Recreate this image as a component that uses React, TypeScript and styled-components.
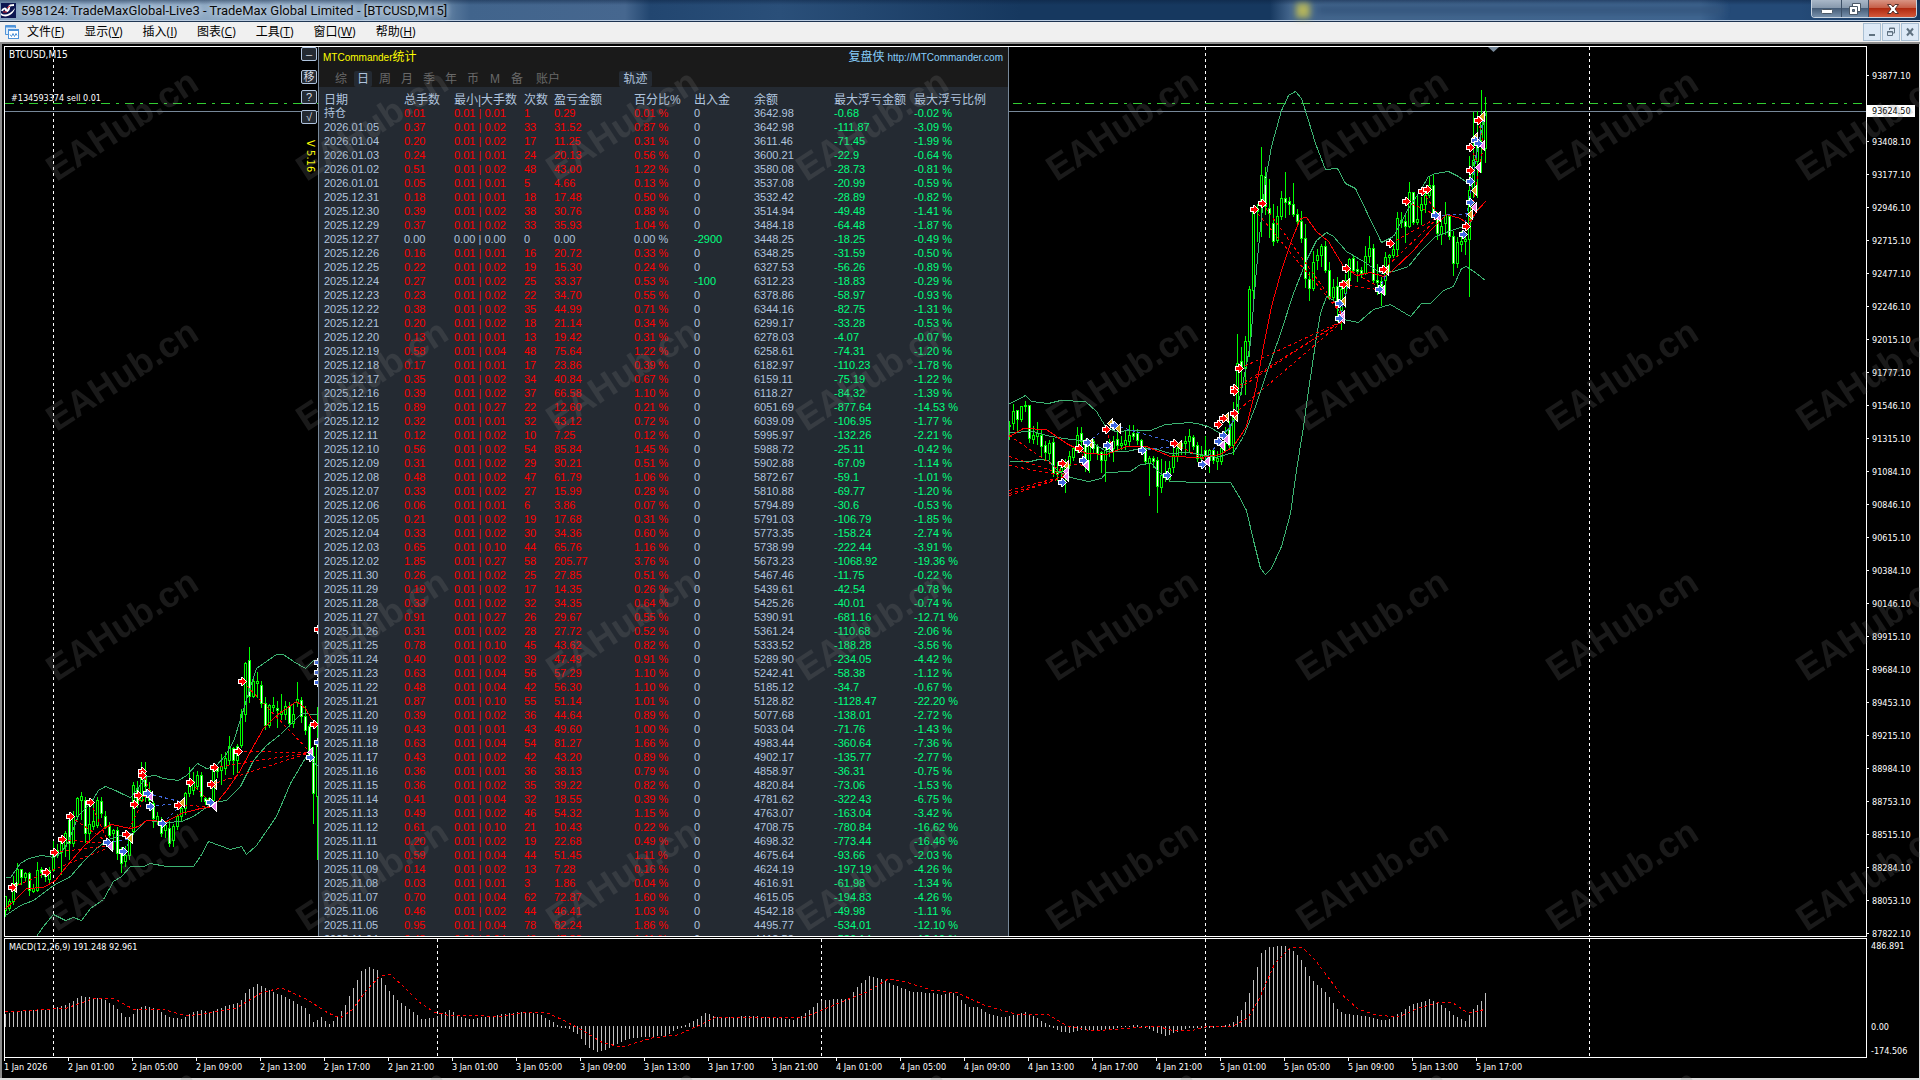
import React from 'react';
import styled, { createGlobalStyle, css } from 'styled-components';

const ui = `Roboto, "Noto Sans CJK SC", sans-serif`;
const axisFont = `"DejaVu Sans Condensed", "Noto Sans CJK SC", sans-serif`;
const panelFont = `"Liberation Sans", "Noto Sans CJK SC", sans-serif`;

const GlobalStyle = createGlobalStyle`
  *, *::before, *::after { box-sizing: border-box; }
  html, body, #root { height: 100%; }
  body { margin: 0; background: #000; overflow: hidden; }
  button { font: inherit; margin: 0; padding: 0; border: 0; background: none; color: inherit; }
`;

const Window = styled.div`
  position: relative;
  height: 100vh;
  min-height: 700px;
  display: flex;
  flex-direction: column;
  overflow: hidden;
  background: #000;
  font-family: ${ui};
`;

const TitleBar = styled.header`
  position: relative;
  height: 22px;
  flex: none;
  display: flex;
  align-items: flex-start;
  padding-right: 3px;
  border-bottom: 1px solid #1d3350;
  box-shadow: inset 0 -1px 0 #b9cbe0;
  background:
    linear-gradient(180deg, rgba(10, 30, 60, 0.45) 0, rgba(10, 30, 60, 0) 5px),
    linear-gradient(90deg, #86a2c0 0, #8fa9c4 300px, #7f9bb8 420px, #41648c 470px, #46678f 625px, #224670 650px, #2a4f79 780px, #16385f 1020px, #16385f 1270px, #43658c 1290px, #3f6590 1700px, #244a77 1730px, #244a77 1800px, #16385f 100%);
`;

const AppTitle = styled.h1`
  margin: 0 0 0 5px;
  font-size: 13px;
  line-height: 21px;
  font-weight: 400;
  color: #0a0a0a;
  white-space: nowrap;
  text-shadow: 0 0 8px #d4e0ec, 0 0 5px #d4e0ec;
`;

const Ghost = styled.div`
  flex: none;
  display: flex;
  align-items: center;
  gap: 8px;
  height: 20px;
  margin-left: auto;
  margin-right: 88px;
  filter: blur(3px);
  &::before { content: ''; width: 14px; height: 15px; background: #b3b45c; }
  &::after { content: ''; width: 405px; height: 6px; background: #32537a; }
`;

const Caption = styled.div`
  flex: none;
  display: flex;
  height: 18px;
  border: 1px solid #c7d3e0;
  border-top: 0;
  border-radius: 0 0 4px 4px;
  overflow: hidden;
`;

const CaptionButton = styled.button<{ $w: number; $close?: boolean }>`
  width: ${p => p.$w}px;
  display: grid;
  place-items: center;
  background: ${p => p.$close
    ? 'linear-gradient(#d99483 0, #c65f48 45%, #b02a10 50%, #d4583a 100%)'
    : 'linear-gradient(#aab8c8 0, #8799ad 45%, #465d78 50%, #7790ab 100%)'};
  & + & { border-left: 1px solid #3c4f66; }
`;

const MenuBar = styled.nav`
  height: 20px;
  flex: none;
  display: flex;
  align-items: center;
  gap: 20px;
  padding: 0 1px 0 5px;
  background: #f0f0f0;
  color: #000;
  font-size: 12px;
`;

const MenuIcon = styled.svg`
  margin-right: -12px;
`;

const MenuItem = styled.button`
  line-height: 20px;
  white-space: nowrap;
  font-family: "Open Sans", "Noto Sans CJK SC", sans-serif;
  u { text-underline-offset: 1px; }
`;

const ChildControls = styled.div`
  margin-left: auto;
  display: flex;
  gap: 1px;
`;

const ChildButton = styled.button`
  width: 18px;
  height: 18px;
  display: grid;
  place-items: center;
  border: 1px solid #a9bfd3;
  background: #dde9f6;
`;

const Workspace = styled.main`
  position: relative;
  flex: 1;
  min-height: 0;
  display: flex;
  flex-direction: column;
  padding: 2px 2px 0 4px;
  border-top: 2px solid #8c8c8c;
  border-bottom: 2px solid #dcdcdc;
  box-shadow: inset 2px 0 0 #8c8c8c, inset -1px 0 0 #d8d8d8;
  background: #000;
  color: #fff;
  font: 9px/12px ${axisFont};
`;

const ChartRow = styled.section<{ $h?: number }>`
  display: flex;
  min-height: 0;
  ${p => (p.$h ? css`flex: none; height: ${p.$h}px; margin-top: 1px;` : css`flex: 1;`)}
`;

const Plot = styled.div`
  position: relative;
  flex: 1;
  min-width: 0;
  overflow: hidden;
  border: 1px solid #fff;
`;

const Canvas = styled.svg`
  position: absolute;
  inset: 0;
  width: 100%;
  height: 100%;
`;

const SymbolLabel = styled.div`
  position: relative;
  padding: 2px 4px 1px;
  font-size: 10px;
  line-height: 12px;
`;

const IndicatorLabel = styled(SymbolLabel)`
  font-size: 9px;
`;

const OrderLabel = styled.div`
  position: relative;
  padding: 30px 6px 0;
`;

const PriceAxis = styled.div`
  position: relative;
  flex: none;
  width: 51px;
  padding-top: 13px;
`;

const PriceTick = styled.div<{ $h: number }>`
  height: ${p => p.$h}px;
  display: flex;
  align-items: center;
  &::before { content: ''; width: 2px; height: 1px; background: #fff; margin-right: 3px; }
`;

const CurrentPrice = styled.div`
  position: absolute;
  left: 0;
  right: 3px;
  top: 59px;
  height: 12px;
  padding-left: 5px;
  background: #fff;
  color: #000;
`;

const MacdAxis = styled.div`
  flex: none;
  width: 51px;
  display: flex;
  flex-direction: column;
  padding-top: 2px;
`;

const MacdTick = styled.div<{ $gap?: number }>`
  padding-left: 4px;
  margin-top: ${p => p.$gap || 0}px;
`;

const TimeAxis = styled.div`
  flex: none;
  display: flex;
  height: 20px;
  overflow: hidden;
`;

const TimeTick = styled.div`
  flex: none;
  width: 64px;
  white-space: nowrap;
  &::before { content: ''; display: block; width: 1px; height: 3px; background: #fff; }
`;

const Overlay = styled.div`
  position: absolute;
  left: 296px;
  top: 0;
  bottom: 0;
  display: flex;
  align-items: stretch;
`;

const Tools = styled.div`
  width: 17px;
  display: flex;
  flex-direction: column;
  align-items: flex-start;
  gap: 6px;
`;

const ToolButton = styled.button<{ $first?: boolean }>`
  width: 16px;
  height: 14px;
  margin-bottom: ${p => (p.$first ? 3 : 0)}px;
  border: 1px solid #b0c4de;
  border-radius: 2px;
  background: #242a32;
  color: #d9dde2;
  font: 11px/12px ${panelFont};
  overflow: hidden;
`;

const Version = styled.div`
  writing-mode: vertical-rl;
  margin: 10px 0 0 3px;
  color: #ff0;
  font: 10px/12px "DejaVu Sans", sans-serif;
  white-space: nowrap;
`;

const Panel = styled.aside`
  width: 691px;
  border: solid #778899;
  border-width: 0 1px;
  background: #242a32;
  font: 11px/14px ${panelFont};
  color: #b0c4de;
  overflow: hidden;
`;

const PanelHead = styled.div`
  height: 40px;
  background: #1a1a1a;
`;

const PanelTitle = styled.div`
  display: flex;
  justify-content: space-between;
  padding: 2px 5px 0 4px;
  font-size: 10px;
  line-height: 16px;
  color: #ff0;
  a { color: #87cefa; text-decoration: none; }
`;

const Han = styled.span`
  font-size: 12px;
`;

const Tabs = styled.div`
  display: flex;
  gap: 4px;
  padding: 5px 0 0 13px;
`;

const Tab = styled.button<{ $w?: number; $on?: boolean; $push?: boolean }>`
  width: ${p => p.$w || 18}px;
  height: 16px;
  margin-left: ${p => (p.$push ? 49 : 0)}px;
  border-radius: 2px;
  font-size: 12px;
  line-height: 15px;
  color: ${p => (p.$on ? '#b0c4de' : '#696969')};
  background: ${p => (p.$on ? '#242a32' : 'transparent')};
`;

const Table = styled.table`
  table-layout: fixed;
  width: 680px;
  margin: 7px 0 0 5px;
  border-collapse: collapse;
`;

const HeadCell = styled.th`
  height: 12px;
  padding: 0;
  font-size: 12px;
  line-height: 12px;
  font-weight: 400;
  text-align: left;
  white-space: nowrap;
`;

type Tone = 'base' | 'up' | 'down';
const toneColor: Record<Tone, string> = { base: '#b0c4de', up: '#ff0000', down: '#00ff7f' };

const Cell = styled.td<{ $tone: Tone }>`
  height: 14px;
  padding: 0;
  line-height: 14px;
  white-space: nowrap;
  color: ${p => toneColor[p.$tone]};
`;

const Watermarks = styled.svg`
  position: absolute;
  inset: 0;
  width: 100%;
  height: 100%;
  pointer-events: none;
`;

/* date, lots, max lot, trades, profit, percent, deposit, balance, drawdown, drawdown percent */
const stats = `持仓 0.01 0.01 1 0.29 0.01 0 3642.98 -0.68 -0.02
2026.01.05 0.37 0.02 33 31.52 0.87 0 3642.98 -111.87 -3.09
2026.01.04 0.20 0.02 17 11.25 0.31 0 3611.46 -71.45 -1.99
2026.01.03 0.24 0.01 24 20.13 0.56 0 3600.21 -22.9 -0.64
2026.01.02 0.51 0.02 48 43.00 1.22 0 3580.08 -28.73 -0.81
2026.01.01 0.05 0.01 5 4.66 0.13 0 3537.08 -20.99 -0.59
2025.12.31 0.18 0.01 18 17.48 0.50 0 3532.42 -28.89 -0.82
2025.12.30 0.39 0.02 38 30.76 0.88 0 3514.94 -49.48 -1.41
2025.12.29 0.37 0.02 33 35.93 1.04 0 3484.18 -64.48 -1.87
2025.12.27 0.00 0.00 0 0.00 0.00 -2900 3448.25 -18.25 -0.49
2025.12.26 0.16 0.01 16 20.72 0.33 0 6348.25 -31.59 -0.50
2025.12.25 0.22 0.02 19 15.30 0.24 0 6327.53 -56.26 -0.89
2025.12.24 0.27 0.02 25 33.37 0.53 -100 6312.23 -18.83 -0.29
2025.12.23 0.23 0.02 22 34.70 0.55 0 6378.86 -58.97 -0.93
2025.12.22 0.38 0.02 35 44.99 0.71 0 6344.16 -82.75 -1.31
2025.12.21 0.20 0.02 18 21.14 0.34 0 6299.17 -33.28 -0.53
2025.12.20 0.13 0.01 13 19.42 0.31 0 6278.03 -4.07 -0.07
2025.12.19 0.58 0.04 48 75.64 1.22 0 6258.61 -74.31 -1.20
2025.12.18 0.17 0.01 17 23.86 0.39 0 6182.97 -110.23 -1.78
2025.12.17 0.35 0.02 34 40.84 0.67 0 6159.11 -75.19 -1.22
2025.12.16 0.39 0.02 37 66.58 1.10 0 6118.27 -84.32 -1.39
2025.12.15 0.89 0.27 22 12.60 0.21 0 6051.69 -877.64 -14.53
2025.12.12 0.32 0.01 32 43.12 0.72 0 6039.09 -106.95 -1.77
2025.12.11 0.12 0.02 10 7.25 0.12 0 5995.97 -132.26 -2.21
2025.12.10 0.56 0.02 54 85.84 1.45 0 5988.72 -25.11 -0.42
2025.12.09 0.31 0.02 29 30.21 0.51 0 5902.88 -67.09 -1.14
2025.12.08 0.48 0.02 47 61.79 1.06 0 5872.67 -59.1 -1.01
2025.12.07 0.33 0.02 27 15.99 0.28 0 5810.88 -69.77 -1.20
2025.12.06 0.06 0.01 6 3.86 0.07 0 5794.89 -30.6 -0.53
2025.12.05 0.21 0.02 19 17.68 0.31 0 5791.03 -106.79 -1.85
2025.12.04 0.33 0.02 30 34.36 0.60 0 5773.35 -158.24 -2.74
2025.12.03 0.65 0.10 44 65.76 1.16 0 5738.99 -222.44 -3.91
2025.12.02 1.85 0.27 58 205.77 3.76 0 5673.23 -1068.92 -19.36
2025.11.30 0.26 0.02 25 27.85 0.51 0 5467.46 -11.75 -0.22
2025.11.29 0.19 0.02 17 14.35 0.26 0 5439.61 -42.54 -0.78
2025.11.28 0.33 0.02 32 34.35 0.64 0 5425.26 -40.01 -0.74
2025.11.27 0.91 0.27 26 29.67 0.55 0 5390.91 -681.16 -12.71
2025.11.26 0.31 0.02 28 27.72 0.52 0 5361.24 -110.68 -2.06
2025.11.25 0.78 0.10 45 43.62 0.82 0 5333.52 -188.28 -3.56
2025.11.24 0.40 0.02 39 47.49 0.91 0 5289.90 -234.05 -4.42
2025.11.23 0.63 0.04 56 57.29 1.10 0 5242.41 -58.38 -1.12
2025.11.22 0.48 0.04 42 56.30 1.10 0 5185.12 -34.7 -0.67
2025.11.21 0.87 0.10 55 51.14 1.01 0 5128.82 -1128.47 -22.20
2025.11.20 0.39 0.02 36 44.64 0.89 0 5077.68 -138.01 -2.72
2025.11.19 0.43 0.01 43 49.60 1.00 0 5033.04 -71.76 -1.43
2025.11.18 0.63 0.04 54 81.27 1.66 0 4983.44 -360.64 -7.36
2025.11.17 0.43 0.02 42 43.20 0.89 0 4902.17 -135.77 -2.77
2025.11.16 0.36 0.01 36 38.13 0.79 0 4858.97 -36.31 -0.75
2025.11.15 0.36 0.02 35 39.22 0.82 0 4820.84 -73.06 -1.53
2025.11.14 0.41 0.04 32 18.55 0.39 0 4781.62 -322.43 -6.75
2025.11.13 0.49 0.02 46 54.32 1.15 0 4763.07 -163.04 -3.42
2025.11.12 0.61 0.10 21 10.43 0.22 0 4708.75 -780.84 -16.62
2025.11.11 0.20 0.02 19 22.68 0.49 0 4698.32 -773.44 -16.46
2025.11.10 0.59 0.04 44 51.45 1.11 0 4675.64 -93.66 -2.03
2025.11.09 0.14 0.02 13 7.28 0.16 0 4624.19 -197.19 -4.26
2025.11.08 0.03 0.01 3 1.86 0.04 0 4616.91 -61.98 -1.34
2025.11.07 0.70 0.04 62 72.87 1.60 0 4615.05 -194.83 -4.26
2025.11.06 0.46 0.02 44 46.41 1.03 0 4542.18 -49.98 -1.11
2025.11.05 0.95 0.04 78 82.24 1.86 0 4495.77 -534.01 -12.10
2025.11.04 0.48 0.04 46 47.88 1.11 0 4413.53 -536.14 -12.19`.split('\n').map(r => r.split(' '));

const columns: [string, number][] = [
  ['日期', 80], ['总手数', 50], ['最小|大手数', 70], ['次数', 30], ['盈亏金额', 80],
  ['百分比%', 60], ['出入金', 60], ['余额', 80], ['最大浮亏金额', 80], ['最大浮亏比例', 90],
];

const prices = '93877.10 93639.10 93408.10 93177.10 92946.10 92715.10 92477.10 92246.10 92015.10 91777.10 91546.10 91315.10 91084.10 90846.10 90615.10 90384.10 90146.10 89915.10 89684.10 89453.10 89215.10 88984.10 88753.10 88515.10 88284.10 88053.10 87822.10'.split(' ');

const times = ['1 Jan 2026'];
[2, 3, 4, 5].forEach(d => ['01', '05', '09', '13', '17', '21'].forEach(h => {
  if (!(d === 5 && h === '21')) times.push(`${d} Jan ${h}:00`);
}));

/* Each stretch of history is kept on a grid of thirds of a pixel from its own origin. */
type Stretch = {
  x: number; y: number; first: number;
  bars: string; green: string[]; red: string[];
  marks: Record<string, string>; lines: Record<string, string>;
};

const stretches: Stretch[] = [
  {
    x: 0, y: 600, first: 5,
    bars: `885 890 930 945 u,895 905 925 928 u,825 850 905 910 u,788 808 850 852 u,805 808 832 850 d,815 820 832 838 u,815 820 870 882 d,850 865 873 875 u,785 812 870 872 u,800 808 818 830 d,805 815 830 840 d,800 812 838 850 u,720 750 812 812 u,730 750 765 770 d,705 720 758 820 u,690 700 740 765 u,640 660 730 775 d,630 650 730 735 u,590 595 650 655 u,573 590 600 655 u,590 602 700 725 d,600 672 700 725 u,600 665 680 685 u,590 600 675 680 u,590 605 640 650 d,630 648 680 682 d,665 680 705 710 d,685 692 700 745 u,680 690 760 775 d,740 755 790 815 d,735 765 785 795 u,700 710 765 775 u,545 555 695 700 u,542 565 610 620 d,485 510 600 600 u,483 530 560 600 d,545 570 600 620 d,600 610 655 680 d,635 650 665 670 u,650 660 700 705 d,660 675 690 710 u,660 685 730 735 d,670 680 720 735 u,640 650 680 685 u,610 625 650 660 u,575 580 625 640 u,500 550 580 585 u,515 545 570 580 u,510 525 560 565 u,515 525 590 600 d,590 595 605 610 d,590 595 605 620 u,500 510 600 620 u,495 505 515 530 d,460 500 510 550 u,455 475 505 520 u,405 440 480 490 u,440 445 480 520 d,430 440 480 515 u,325 342 435 440 u,183 190 342 360 u,138 180 290 305 d,235 245 290 290 u,215 243 250 290 u,240 255 310 318 d,290 310 375 385 d,310 315 375 378 u,290 315 322 330 u,300 325 330 380 d,280 335 342 355 u,300 320 342 355 u,305 320 370 375 d,310 342 370 380 u,245 298 308 315 u,290 300 350 365 d,315 350 390 400 d,370 378 470 480 d,440 470 580 668 d,320 420 590 775 u`,
    green: [
      '15,832 30,832 45,810 60,790 85,775 125,767 160,772 185,757 205,725 235,645 270,610 295,570 315,560 345,570 370,583 390,592 410,570 440,528 465,527 490,535 535,541 560,525 593,490 620,505 645,500 675,465 700,425 725,350 750,260 770,205 800,183 830,163 850,163 880,185 917,205 940,180 955,180',
      '15,945 60,915 100,900 160,855 210,828 250,785 290,745 325,718 360,705 400,700 440,662 500,668 545,665 580,650 640,608 680,600 720,560 760,480 800,435 840,402 870,372 905,340 945,342 955,340',
      '110,1008 130,980 160,942 195,962 220,953 245,960 270,925 310,898 340,843 365,830 390,800 430,800 450,790 500,798 580,798 600,770 625,725 690,748 725,740 738,763 770,735 830,650 870,550 900,500 920,470 955,500',
    ],
    red: ['15,925 40,905 80,865 130,862 165,840 200,800 250,740 310,685 335,673 390,685 415,680 440,662 500,665 545,640 600,625 640,620 680,570 715,520 750,455 790,385 830,345 890,305 915,325 935,355 955,375'],
    marks: {
      gold: '47,862 393,714 550,607 646,553',
      violet: '334,738 455,588 646,620 933,456',
      blue: '322,727 369,753 442,580 452,619 488,670 632,606 932,472 956,187 956,217 956,247 956,427',
      red: '37,862 139,817 164,757 188,718 212,648 272,606 404,612 416,586 428,514 428,525 380,703 536,615 571,547 634,552 643,502 716,453 728,244 944,373 956,88',
    },
    lines: {
      red: '37,862 139,817;139,817 334,738;164,757 330,735;188,718 325,730;212,648 320,725;272,606 322,720;404,612 450,570;380,703 440,580;428,514 450,580;536,615 646,620;571,547 640,615;634,552 930,458;643,502 930,458;716,453 930,456;728,244 930,456',
      blue: '369,753 393,714;322,727 393,714;442,580 550,607;452,619 550,607;488,670 550,607',
    },
  },
  {
    x: 1000, y: 380, first: 1009,
    bars: `120 135 140 175 u,70 95 130 145 u,88 92 118 155 d,75 80 118 122 u,62 75 80 90 u,73 75 175 185 d,135 165 178 188 u,125 160 168 190 u,145 165 198 230 d,180 195 218 235 d,178 190 220 235 u,172 188 280 285 d,245 275 282 297 d,235 262 275 290 u,235 250 275 335 u,210 230 255 262 u,195 205 232 238 u,140 165 205 215 u,140 160 185 215 d,175 180 235 270 d,180 190 240 275 u,175 185 205 215 d,190 198 220 235 d,210 218 240 275 d,200 210 240 300 u,175 190 208 225 u,165 185 205 240 u,140 178 195 205 d,165 190 196 205 u,150 180 192 205 u,132 165 185 195 u,132 160 168 175 d,145 160 182 190 d,175 180 208 215 d,200 208 245 250 d,225 235 250 342 u,225 235 245 260 d,228 242 320 395 d,235 285 322 335 u,240 282 290 300 d,240 265 298 300 u,195 225 262 275 u,190 205 230 240 u,180 190 205 220 u,165 185 190 220 u,145 170 185 210 u,162 172 200 205 d,185 195 235 240 d,195 225 235 240 u,165 210 230 250 d,205 210 240 275 u,205 212 240 248 d,210 235 245 265 u,190 205 245 250 u`,
    green: [
      '27,70 50,62 75,47 95,65 145,70 180,62 255,65 290,95 315,140 345,155 400,150 450,150 495,133 570,128 603,133',
      '27,158 100,155 140,165 190,175 240,180 280,190 320,215 380,215 420,205 460,205 510,220 560,218 603,222',
      '27,244 90,244 115,238 145,240 175,275 210,292 265,303 305,295 320,277 390,275 420,252 455,250 475,275 510,305 603,308',
    ],
    red: ['27,170 70,145 140,148 200,190 260,220 320,222 380,200 440,198 510,228 603,233'],
    marks: {
      gold: '203,257 275,189 335,130 358,145 540,195',
      violet: '203,275 203,290 263,257 335,200 624,243',
      blue: '188,307 249,241 262,187 322,195 344,135 428,211 501,286 608,253',
      red: '188,250 238,205 320,147 524,189',
    },
    lines: {
      red: '27,165 203,285;27,228 200,285;27,255 200,288;27,330 200,285;27,340 200,288;27,346 200,290;188,250 260,257;238,205 263,257;320,147 335,200;524,189 624,243',
      blue: '262,187 335,130;344,135 530,190;428,211 540,195;608,253 669,166',
    },
  },
  {
    x: 1200, y: 80, first: 1225,
    bars: `1040 1070 1090 1110 u,1020 1045 1095 1100 d,965 1000 1095 1120 u,760 850 1000 1020 u,800 845 860 940 d,765 785 865 940 u,615 628 785 825 u,375 395 630 685 u,370 385 395 480 u,200 285 380 465 u,258 290 380 400 d,295 385 400 470 d,370 430 485 492 d,375 408 480 485 u,330 355 410 415 u,275 355 368 410 d,350 365 373 400 d,308 372 402 405 d,385 402 425 435 d,390 425 475 485 d,430 475 595 620 d,575 597 625 657 d,510 548 625 628 u,505 525 542 565 u,490 498 525 555 u,480 498 570 575 d,545 570 650 655 d,595 622 652 660 u,590 620 680 720 d,600 628 690 745 u,580 600 640 680 u,532 538 600 605 u,525 535 570 575 d,540 568 575 600 d,560 570 580 590 d,495 528 580 580 u,465 505 530 545 u,490 505 600 605 d,550 600 608 640 d,590 605 620 672 d,515 532 600 640 u,520 527 533 570 u,485 508 525 530 u,395 415 508 525 u,395 420 428 440 d,400 425 440 485 d,305 338 440 440 u,335 338 428 430 d,345 418 428 430 u,350 372 390 430 u,320 345 372 395 u,285 315 345 350 u,283 316 400 410 d,395 415 460 475 d,415 440 462 490 u,365 405 430 460 u,400 410 470 475 d,450 468 550 582 d,470 488 550 560 u,450 485 492 510 u,470 478 485 520 u,225 330 478 645 u,95 240 330 350 u,90 180 245 350 u,28 110 180 275 u,48 95 205 245 u`,
    green: [
      '0,1033 25,1040 60,1060 85,1050 100,1020 125,930 150,790 165,600 180,440 195,300 215,200 245,90 265,45 285,35 305,55 325,120 345,190 375,268 412,265 435,310 465,325 500,395 545,487 580,470 625,385 655,340 685,290 705,280 745,273 775,290 795,305 808,295 835,200 855,100',
      '0,1122 50,1132 100,1118 130,1070 165,980 200,880 240,760 280,640 320,540 350,480 378,457 400,470 440,515 490,545 545,580 580,573 625,560 660,515 705,470 755,450 790,440 815,425 830,390 855,365',
      '0,1208 90,1208 115,1245 140,1290 160,1380 180,1465 195,1482 215,1465 245,1400 270,1300 290,1170 310,1040 325,930 345,790 360,700 378,648 400,660 430,718 475,727 520,688 570,673 630,708 665,670 690,670 730,630 760,620 785,565 800,558 830,580 855,602',
    ],
    red: ['0,1133 60,1122 100,1100 140,1040 165,930 190,800 215,680 245,570 275,480 300,415 318,412 350,455 385,485 430,560 470,585 510,577 550,590 575,573 640,510 690,450 740,402 780,415 805,432 830,395 855,365'],
    marks: {
      gold: '82,1012 108,1010 444,610 432,664 563,572 815,402 826,330 828,172 850,110',
      violet: '71,1096 82,1078 431,705 431,715 551,630 718,408 826,382 838,262 850,196',
      blue: '56,1084 69,1066 417,670 417,715 538,628 706,406 789,463 812,366 812,303 825,180 836,190',
      red: '56,1032 69,1014 104,1000 104,925 104,933 117,865 164,388 188,370 430,612 440,565 549,568 572,490 620,364 668,334 682,327 800,438 812,270 812,202 836,121',
    },
    lines: {
      red: '117,865 431,720;104,925 431,722;104,933 431,718;104,1000 431,722;164,388 431,710;188,370 431,705;430,612 551,630;440,565 551,628;549,568 718,408;572,490 718,408;620,364 718,408;668,334 718,408;804,438 850,196;812,202 838,262;836,121 850,196',
      blue: '417,715 444,610;538,628 563,572;706,406 815,400;789,463 850,110;56,1084 108,1010',
    },
  },
];

const toPoints = (s: string) => s.trim().split(' ').map(p => p.split(',').map(Number));

const macdTops = toPoints('5,1014 15,1011 31,1010 49,1010 58,1007 67,1004 81,996 92,998 103,999 113,1005 125,1017 130,1017 138,1008 147,1006 156,1009 168,1017 182,1019 189,1014 199,1010 210,1012 217,1009 231,1004 239,1003 246,991 257,984 269,990 285,997 305,1008 309,1014 313,1022 321,1017 329,1024 337,1017 344,1007 353,988 361,971 369,967 377,970 386,987 398,1001 411,1010 421,1019 432,1018 450,1010 459,1017 471,1019 490,1016 517,1012 539,1014 554,1023 562,1027 569,1028 577,1033 586,1045 598,1051 612,1046 625,1039 640,1036 666,1035 675,1029 681,1027 692,1022 705,1013 719,1018 744,1016 771,1017 794,1020 805,1013 820,1001 836,999 848,999 857,987 869,976 880,979 894,985 912,992 931,993 943,995 952,992 960,998 962,1002 969,1007 978,1007 987,1013 1003,1017 1025,1012 1040,1020 1052,1026 1058,1030 1070,1032 1079,1029 1107,1029 1116,1027 1134,1025 1147,1027 1157,1032 1166,1035 1179,1030 1187,1027 1205,1027 1223,1026 1232,1023 1242,1008 1249,993 1257,967 1261,953 1268,947 1285,946 1294,952 1303,962 1310,978 1326,993 1338,1010 1345,1014 1364,1016 1383,1021 1392,1018 1410,1005 1430,999 1444,1007 1456,1017 1465,1021 1474,1008 1481,1001 1485,993');

const macdSignal = '5,1012 37,1010 67,1008 95,998 115,999 133,1009 165,1010 187,1016 208,1013 236,1008 263,992 282,988 306,999 328,1013 340,1018 352,1010 367,990 380,976 390,974 404,987 419,1002 434,1012 447,1015 478,1015 496,1017 527,1012 545,1012 563,1020 582,1030 603,1043 622,1047 652,1038 677,1035 698,1026 716,1017 772,1017 805,1017 827,1008 851,998 867,992 888,979 906,982 931,990 958,993 962,995 984,1005 1015,1014 1049,1015 1067,1026 1092,1031 1119,1029 1156,1026 1171,1030 1190,1031 1205,1027 1233,1026 1248,1018 1260,997 1275,963 1291,947 1303,948 1315,960 1340,993 1358,1009 1376,1015 1398,1017 1419,1008 1441,1002 1453,1003 1468,1013 1480,1011 1485,1009';

const sample = (pts: number[][], x: number) => {
  for (let i = 1; i < pts.length; i++) {
    if (x <= pts[i][0]) {
      const [ax, ay] = pts[i - 1];
      const [bx, by] = pts[i];
      return Math.round(ay + ((by - ay) * (x - ax)) / (bx - ax));
    }
  }
  return pts[pts.length - 1][1];
};

const dayLines = [53, 437, 821, 1205, 1589];
const markColor: Record<string, string> = { gold: '#daa520', violet: '#ee82ee', blue: '#4169e1', red: '#ff0000' };
const ARROW = 'M-3,-2 H0 V-4 H1 L5,0 L1,4 H0 V2 H-3 Z';
const WEDGE = 'M-3,0 L2,-5 V5 Z';

const History = ({ s }: { s: Stretch }) => {
  const px = (v: number) => Math.floor(s.x + v / 3) + 0.5;
  const py = (v: number) => Math.floor(s.y + v / 3) + 0.5;
  const path = (t: string) => toPoints(t).map(([x, y]) => `${px(x)},${py(y)}`).join(' ');
  return (
    <g fill="none" shapeRendering="crispEdges">
      {s.bars.split(',').map((b, i) => {
        const [hi, top, bot, lo, dir] = b.split(' ');
        const x = s.first + i * 4 + 0.5;
        return (
          <g key={i} stroke="#00ff00">
            <path d={`M${x},${py(+hi)}V${py(+lo) + 1}`} />
            <rect x={x - 1} y={py(+top)} width={2} height={Math.max(1, py(+bot) - py(+top))} fill={dir === 'd' ? '#fff' : '#000'} />
            {dir === 'd' && <path stroke="#fff" d={`M${x},${py(+top) + 0.5}V${py(+bot) - 0.5}`} />}
          </g>
        );
      })}
      {s.green.map(t => <polyline key={t} points={path(t)} stroke="#3cb371" />)}
      {s.red.map(t => <polyline key={t} points={path(t)} stroke="#ff0000" />)}
      {Object.entries(s.lines).map(([c, list]) => list.split(';').map(t => (
        <polyline key={c + t} points={path(t)} stroke={markColor[c]} strokeDasharray="3 3" />
      )))}
      {Object.entries(s.marks).map(([c, list]) => toPoints(list).map(([x, y], i) => (
        <path key={c + i} d={c === 'gold' || c === 'violet' ? WEDGE : ARROW}
          transform={`translate(${px(x) - 1} ${py(y)})`} fill={markColor[c]} stroke="#fff" />
      )))}
    </g>
  );
};

const DayLines = ({ from, to }: { from: number; to: number }) => (
  <g stroke="#fff" strokeDasharray="3 3" shapeRendering="crispEdges">
    {dayLines.map(x => <path key={x} d={`M${x + 0.5},${from}V${to}`} />)}
  </g>
);

const PriceChart = () => (
  <Canvas>
    <g transform="translate(-5 -47)">
      <DayLines from={47} to={1200} />
      <path d="M5,103.5H4000" stroke="#32cd32" strokeDasharray="9 6 3 6" shapeRendering="crispEdges" />
      <path d="M5,111.5H4000" stroke="#778899" shapeRendering="crispEdges" />
      <path d="M1488,47H1499L1493.5,52Z" fill="#778899" />
      {stretches.map(s => <History key={s.x} s={s} />)}
    </g>
  </Canvas>
);

const MacdChart = () => (
  <Canvas>
    <g transform="translate(-5 -939)" fill="none" shapeRendering="crispEdges">
      <DayLines from={939} to={1060} />
      <g stroke="#c0c0c0">
        {Array.from({ length: 371 }, (_, i) => {
          const x = 5 + i * 4;
          const y = sample(macdTops, x);
          return <path key={x} d={y < 1027 ? `M${x + 0.5},${y}V1027` : `M${x + 0.5},1026V${y + 1}`} />;
        })}
      </g>
      <polyline points={macdSignal} stroke="#ff0000" strokeWidth="1" strokeDasharray="3 3" />
    </g>
  </Canvas>
);

const menus: [string, string][] = [['文件', 'F'], ['显示', 'V'], ['插入', 'I'], ['图表', 'C'], ['工具', 'T'], ['窗口', 'W'], ['帮助', 'H']];
const tabs = ['综', '日', '周', '月', '季', '年', '币', 'M', '备'];

const StatsPanel = () => (
  <Panel>
    <PanelHead>
      <PanelTitle>
        <span>MTCommander<Han>统计</Han></span>
        <a href="http://MTCommander.com"><Han>复盘侠</Han> http://MTCommander.com</a>
      </PanelTitle>
      <Tabs>
        {tabs.map(t => <Tab key={t} $on={t === '日'}>{t}</Tab>)}
        <Tab $w={36}>账户</Tab>
        <Tab $w={33} $on $push>轨迹</Tab>
      </Tabs>
    </PanelHead>
    <Table>
      <colgroup>{columns.map(([n, w]) => <col key={n} style={{ width: w }} />)}</colgroup>
      <thead><tr>{columns.map(([n]) => <HeadCell key={n} scope="col">{n}</HeadCell>)}</tr></thead>
      <tbody>
        {stats.map(([date, lots, max, n, profit, pct, dep, bal, dd, ddp]) => {
          const flat = n === '0';
          const tone: Tone = flat ? 'base' : 'up';
          return (
            <tr key={date}>
              <Cell $tone="base">{date}</Cell>
              <Cell $tone={tone}>{lots}</Cell>
              <Cell $tone={tone}>{`${flat ? '0.00' : '0.01'} | ${max}`}</Cell>
              <Cell $tone={tone}>{n}</Cell>
              <Cell $tone={tone}>{profit}</Cell>
              <Cell $tone={tone}>{pct} %</Cell>
              <Cell $tone={dep === '0' ? 'base' : 'down'}>{dep}</Cell>
              <Cell $tone="base">{bal}</Cell>
              <Cell $tone="down">{dd}</Cell>
              <Cell $tone="down">{ddp} %</Cell>
            </tr>
          );
        })}
      </tbody>
    </Table>
  </Panel>
);

export default function App() {
  return (
    <Window>
      <GlobalStyle />
      <TitleBar>
        <svg width="16" height="20" viewBox="0 0 16 20" aria-hidden="true">
          <rect x="1" y="3" width="15" height="15" fill="#0c1550" />
          <path d="M1 13c3 3 9 2 14-5-1 6-9 11-14 7z" fill="#fff" />
          <path d="M2 11c1-3 4-3 4-1s3 1 3-2 2-3 5-3" fill="none" stroke="#fff" strokeWidth="2" />
          <path d="M7 8l3-2M3 12l4 0" stroke="#d3242c" strokeWidth="1" />
        </svg>
        <AppTitle>598124: TradeMaxGlobal-Live3 - TradeMax Global Limited - [BTCUSD,M15]</AppTitle>
        <Ghost />
        <Caption>
          <CaptionButton $w={29} aria-label="最小化">
            <svg width="14" height="12" viewBox="0 0 14 12"><rect x="1.5" y="6.5" width="11" height="4" rx="1" fill="#fff" stroke="#4b5866" /></svg>
          </CaptionButton>
          <CaptionButton $w={27} aria-label="还原">
            <svg width="14" height="14" viewBox="0 0 14 14" fill="#fff" stroke="#4b5866">
              <path d="M4.500 1.500h8v8h-8z" /><path d="M1.500 4.500h8v8h-8z" /><path d="M4.500 7.500h2v2h-2z" fill="#667b93" />
            </svg>
          </CaptionButton>
          <CaptionButton $w={48} $close aria-label="关闭">
            <svg width="14" height="12" viewBox="0 0 14 12">
              <path d="M1.500 1.500h3.500l2 2.500 2-2.500h3.500l-3.500 4.500 3.500 4.500h-3.500l-2-2.500-2 2.500h-3.500l3.500-4.500z" fill="#fff" stroke="#54302c" />
            </svg>
          </CaptionButton>
        </Caption>
      </TitleBar>
      <MenuBar>
        <MenuIcon width="14" height="14" viewBox="0 0 14 14" fill="none" stroke="#4f93d8" aria-hidden="true">
          <path d="M3 9.500H.5v-9h10V3" fill="#dcecfb" /><path d="M.5 1.500h10" strokeWidth="2" />
          <rect x="3.500" y="4.500" width="10" height="9" fill="#fff" /><path d="M3.500 5h10" strokeWidth="2" />
          <path d="M5 9.500l1.500 2 1.500-3 1.500 3 1.500-3 1 2" />
        </MenuIcon>
        {menus.map(([name, key]) => <MenuItem key={key}>{name}(<u>{key}</u>)</MenuItem>)}
        <ChildControls>
          <ChildButton aria-label="最小化窗口"><svg width="10" height="10"><path d="M2 8h6" stroke="#5f7180" strokeWidth="2" /></svg></ChildButton>
          <ChildButton aria-label="还原窗口">
            <svg width="10" height="10" fill="none" stroke="#5f7180"><path d="M3.500 3V1h5v5H7M3 1.500h6" /><path d="M1.500 4.500h5v4h-5zM1 5h6" /></svg>
          </ChildButton>
          <ChildButton aria-label="关闭窗口"><svg width="10" height="10"><path d="M2 1.500l6 7M8 1.500l-6 7" stroke="#5f7180" strokeWidth="2" /></svg></ChildButton>
        </ChildControls>
      </MenuBar>
      <Workspace>
        <ChartRow>
          <Plot>
            <PriceChart />
            <SymbolLabel>BTCUSD,M15</SymbolLabel>
            <OrderLabel>#134593374 sell 0.01</OrderLabel>
            <Overlay>
              <Tools>
                <ToolButton $first>–</ToolButton>
                <ToolButton>移</ToolButton>
                <ToolButton>?</ToolButton>
                <ToolButton>√</ToolButton>
                <Version>V 5.16</Version>
              </Tools>
              <StatsPanel />
            </Overlay>
          </Plot>
          <PriceAxis>
            {prices.map(p => <PriceTick key={p} $h={33}>{p}</PriceTick>)}
            <CurrentPrice>93624.50</CurrentPrice>
          </PriceAxis>
        </ChartRow>
        <ChartRow $h={120}>
          <Plot>
            <MacdChart />
            <IndicatorLabel>MACD(12,26,9) 191.248 92.961</IndicatorLabel>
          </Plot>
          <MacdAxis>
            <MacdTick>486.891</MacdTick>
            <MacdTick $gap={69}>0.00</MacdTick>
            <MacdTick $gap={12}>-174.506</MacdTick>
          </MacdAxis>
        </ChartRow>
        <TimeAxis>{times.map(t => <TimeTick key={t}>{t}</TimeTick>)}</TimeAxis>
      </Workspace>
      <Watermarks>
        <defs>
          <pattern id="mark" width="250" height="250" patternUnits="userSpaceOnUse">
            <text x="122" y="137" transform="rotate(-33 122 125)" textAnchor="middle" fontSize="36" fontWeight="700"
              fontFamily="Liberation Sans, sans-serif" fill="#808080" fillOpacity="0.2">EAHub.cn</text>
          </pattern>
        </defs>
        <rect width="100%" height="100%" fill="url(#mark)" />
      </Watermarks>
    </Window>
  );
}
